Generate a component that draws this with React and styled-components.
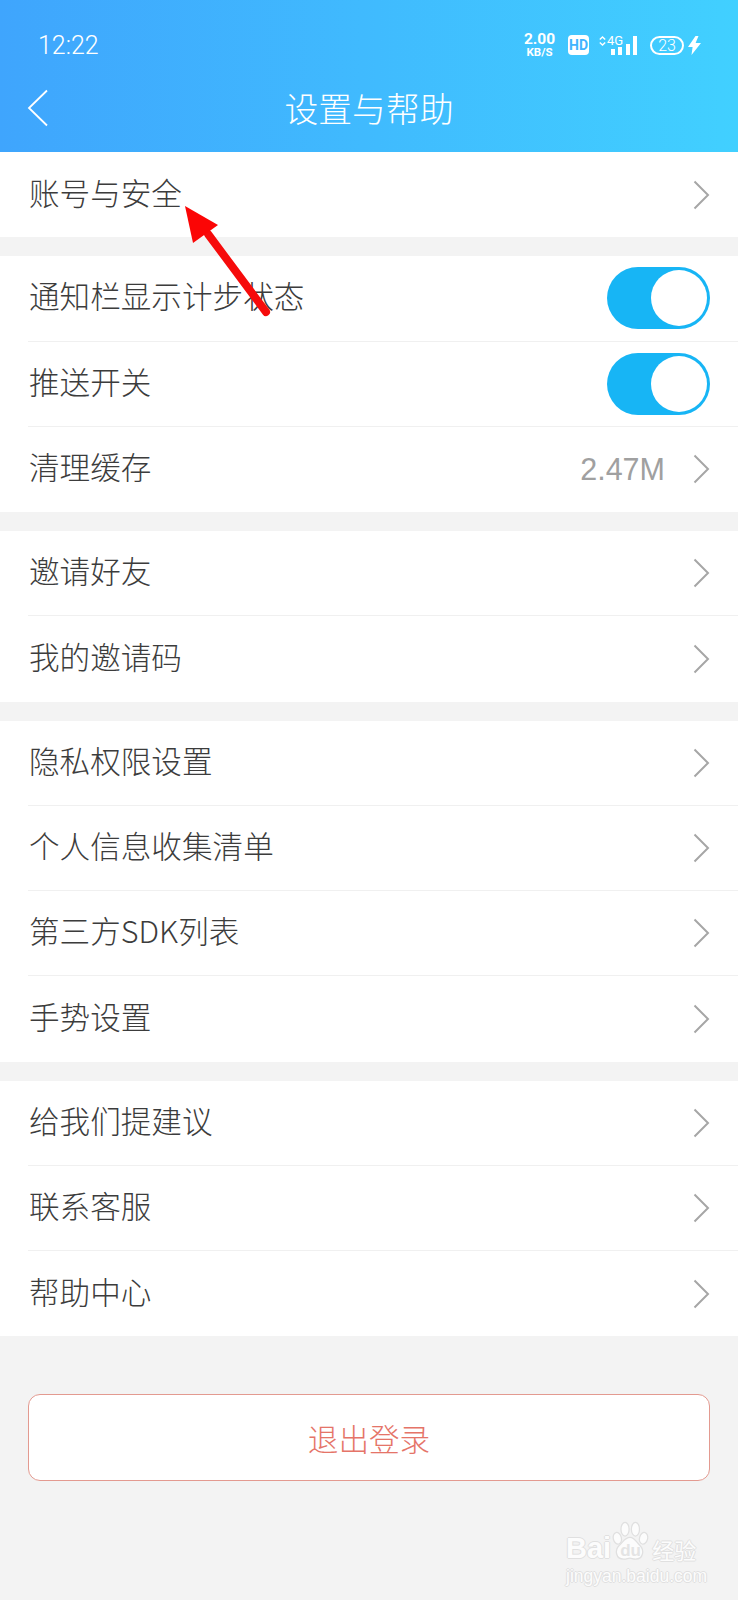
import React from 'react'
import styled, { createGlobalStyle } from 'styled-components'

const sans = `"Noto Sans CJK SC", "Noto Sans", sans-serif`

const groups = [
    [{ label: '账号与安全' }],
    [
        { label: '通知栏显示计步状态', toggle: true },
        { label: '推送开关', toggle: true },
        { label: '清理缓存', value: '2.47M' },
    ],
    [{ label: '邀请好友' }, { label: '我的邀请码' }],
    [
        { label: '隐私权限设置' },
        { label: '个人信息收集清单' },
        { label: '第三方SDK列表' },
        { label: '手势设置' },
    ],
    [{ label: '给我们提建议' }, { label: '联系客服' }, { label: '帮助中心' }],
]

const App = () => {
    return (
        <Page>
            <GlobalStyle />
            <Header>
                <StatusBar>
                    <Clock>12:22</Clock>
                    <StatusIcons>
                        <Speed>
                            <SpeedValue>2.00</SpeedValue>
                            <SpeedUnit>KB/S</SpeedUnit>
                        </Speed>
                        <HdBadge>HD</HdBadge>
                        <Network>
                            <NetworkArrows width="7" height="10" viewBox="0 0 7 10">
                                <path d="M.8 3.6L3.5 1l2.7 2.6M.8 6.4L3.5 9l2.7-2.6" fill="none" stroke="#fff" strokeWidth="1.4" />
                            </NetworkArrows>
                            <NetworkLabel>4G</NetworkLabel>
                            <Bars>
                                <Bar $h={6} />
                                <Bar $h={8} />
                                <Bar $h={11} />
                                <Bar $h={19} />
                            </Bars>
                        </Network>
                        <Battery>23</Battery>
                        <svg width="13" height="19" viewBox="0 0 13 19">
                            <path d="M7.5 0L0 11h4.6L3.5 19 13 7H7.6L10.5 0z" fill="#fff" />
                        </svg>
                    </StatusIcons>
                </StatusBar>
                <NavBar>
                    <BackIcon width="22" height="38" viewBox="0 0 22 38">
                        <path d="M20 1.5L2 19l18 17.5" fill="none" stroke="#fff" strokeWidth="1.8" />
                    </BackIcon>
                    <Title>设置与帮助</Title>
                </NavBar>
            </Header>

            <Groups>
                {groups.map((rows) => (
                    <Group key={rows[0].label}>
                        {rows.map((row) => (
                            <Row key={row.label}>
                                <Label>{row.label}</Label>
                                {row.value && <Value>{row.value}</Value>}
                                {row.toggle ? (
                                    <Toggle>
                                        <Knob />
                                    </Toggle>
                                ) : (
                                    <Chevron width="17" height="30" viewBox="0 0 17 30">
                                        <path d="M1.5 1.5L15 15 1.5 28.5" fill="none" stroke="#a6a6a6" strokeWidth="2" />
                                    </Chevron>
                                )}
                            </Row>
                        ))}
                    </Group>
                ))}
            </Groups>

            <LogoutButton>退出登录</LogoutButton>

            <RedArrow width="90" height="114" viewBox="0 0 90 114">
                <path d="M82 108L24 30" stroke="#f60b0b" strokeWidth="8" strokeLinecap="round" fill="none" />
                <path d="M1 2L9 39 34 21z" fill="#fb0505" />
            </RedArrow>

            <Watermark>
                <WatermarkBrand>
                    <span>Bai</span>
                    <PawMark>
                        <svg width="38" height="42" viewBox="0 0 42 44">
                            <g fill="#fcfcfc" stroke="#e0e0e0" strokeWidth="1.4">
                                <ellipse cx="7" cy="19" rx="4.5" ry="6.5" transform="rotate(-14 7 19)" />
                                <ellipse cx="15.5" cy="9" rx="4.5" ry="7.5" />
                                <ellipse cx="27" cy="9" rx="4.5" ry="7.5" />
                                <ellipse cx="36" cy="19" rx="4.5" ry="6.5" transform="rotate(14 36 19)" />
                                <path d="M21 18c5 0 7 5 11 9 5 5 4 15-5 15-3 0-4-1-6-1s-4 1-7 1C5 42 4 32 9 27c4-3 6-9 12-9z" />
                            </g>
                        </svg>
                        <PawText>du</PawText>
                    </PawMark>
                    <WatermarkCn>经验</WatermarkCn>
                </WatermarkBrand>
                <WatermarkUrl>jingyan.baidu.com</WatermarkUrl>
            </Watermark>
        </Page>
    )
}

const GlobalStyle = createGlobalStyle`
    html, body {
        margin: 0;
        padding: 0;
        background: #f3f3f3;
    }
`

const Page = styled.div`
    position: relative;
    width: 738px;
    height: 1600px;
    overflow: hidden;
    background: #f3f3f3;
    font-family: ${sans};
`

const Header = styled.header`
    height: 152px;
    display: flex;
    flex-direction: column;
    color: #fff;
    background: linear-gradient(90deg, #3fa5fd 0%, #41d0ff 100%);
`

const StatusBar = styled.div`
    height: 90px;
    padding: 0 37px 0 38px;
    box-sizing: border-box;
    display: flex;
    align-items: center;
    justify-content: space-between;
`

const Clock = styled.span`
    font-family: Roboto, sans-serif;
    font-size: 25px;
    font-weight: 300;
`

const StatusIcons = styled.div`
    display: flex;
    align-items: center;
`

const Speed = styled.div`
    width: 33px;
    display: flex;
    flex-direction: column;
    align-items: center;
    font-family: Roboto, sans-serif;
    font-weight: 700;
    margin-right: 12px;
`

const SpeedValue = styled.span`
    font-size: 15.5px;
    line-height: 14px;
`

const SpeedUnit = styled.span`
    font-size: 11.5px;
    line-height: 11px;
    margin-top: 1.5px;
`

const HdBadge = styled.span`
    width: 21px;
    height: 20px;
    border-radius: 4px;
    background: #fff;
    color: #41b4ff;
    font-family: Roboto, sans-serif;
    font-size: 14px;
    font-weight: 700;
    line-height: 20px;
    text-align: center;
    margin-right: 10px;
`

const Network = styled.div`
    width: 38px;
    height: 20px;
    display: flex;
    align-items: flex-start;
    margin-right: 13px;
`

const NetworkArrows = styled.svg`
    flex: none;
    margin-top: 1px;
`

const NetworkLabel = styled.span`
    flex: none;
    width: 15px;
    font-family: Roboto, sans-serif;
    font-size: 13px;
    line-height: 11px;
    margin-left: 1px;
`

const Bars = styled.div`
    flex: none;
    display: flex;
    align-items: flex-end;
    gap: 3.4px;
    height: 20px;
    margin-left: -11px;
`

const Bar = styled.span`
    width: 4px;
    height: ${(props) => props.$h}px;
    background: #fff;
`

const Battery = styled.span`
    width: 34px;
    height: 19px;
    box-sizing: border-box;
    border: 2px solid #fff;
    border-radius: 9.5px;
    font-family: Roboto, sans-serif;
    font-size: 16px;
    font-weight: 300;
    line-height: 15px;
    text-align: center;
    margin-right: 4px;
`

const NavBar = styled.div`
    flex: 1;
    position: relative;
    display: flex;
    align-items: flex-start;
    justify-content: center;
`

const BackIcon = styled.svg`
    position: absolute;
    left: 27px;
    top: -1px;
`

const Title = styled.h1`
    margin: -6px 0 0;
    font-size: 33.8px;
    font-weight: 300;
    line-height: 48px;
`

const Groups = styled.main`
    display: flex;
    flex-direction: column;
    gap: 19px;
`

const Group = styled.section`
    background: #fff;
`

const Row = styled.div`
    height: 85.25px;
    box-sizing: border-box;
    margin-left: 28px;
    padding-right: 28px;
    display: flex;
    align-items: center;
    border-bottom: 1px solid #f0f0f0;

    &:last-child {
        border-bottom: none;
    }
`

const Label = styled.span`
    flex: 1;
    font-size: 30.6px;
    font-weight: 300;
    color: #3c3c3c;
    line-height: 44px;
    margin: -6px 0 0 1px;
`

const Value = styled.span`
    font-family: "Liberation Sans", sans-serif;
    font-size: 30.5px;
    color: #a0a0a0;
    margin-right: 28px;
`

const Chevron = styled.svg`
    display: block;
`

const Toggle = styled.span`
    width: 103px;
    height: 62px;
    box-sizing: border-box;
    padding: 3px;
    border-radius: 31px;
    background: #17b5f5;
    display: flex;
    justify-content: flex-end;
`

const Knob = styled.span`
    width: 56px;
    height: 56px;
    border-radius: 50%;
    background: #fff;
`

const LogoutButton = styled.button`
    display: block;
    width: 682px;
    height: 87px;
    margin: 58px 0 0 28px;
    box-sizing: border-box;
    background: #fff;
    border: 1px solid #e39a90;
    border-radius: 12px;
    color: #e57468;
    font-family: ${sans};
    font-size: 30.6px;
    font-weight: 300;
    padding: 0;
`

const RedArrow = styled.svg`
    position: absolute;
    left: 184px;
    top: 204px;
`

const Watermark = styled.div`
    position: absolute;
    left: 566px;
    top: 1520px;
    width: 132px;
    display: flex;
    flex-direction: column;
    color: #fcfcfc;
    text-shadow: 1px 0 0 #e0e0e0, -1px 0 0 #e0e0e0, 0 1px 0 #e0e0e0, 0 -1px 0 #e0e0e0;
`

const WatermarkBrand = styled.div`
    display: flex;
    align-items: flex-end;
    height: 42px;
    white-space: nowrap;
    font-family: "Liberation Sans", sans-serif;
    font-size: 29px;
    font-weight: 700;
    line-height: 28px;
`

const PawMark = styled.span`
    position: relative;
    flex: none;
    width: 38px;
    height: 42px;

    svg {
        display: block;
    }
`

const PawText = styled.span`
    position: absolute;
    left: 9px;
    bottom: 2px;
    font-size: 17px;
    line-height: 18px;
    color: #e4e4e4;
    text-shadow: none;
`

const WatermarkCn = styled.span`
    flex: none;
    font-family: ${sans};
    font-size: 22px;
    font-weight: 400;
    line-height: 26px;
    margin-left: 3px;
`

const WatermarkUrl = styled.span`
    font-family: "Liberation Sans", sans-serif;
    font-size: 17.5px;
    line-height: 20px;
    margin-top: 4px;
    white-space: nowrap;
`

export default App
